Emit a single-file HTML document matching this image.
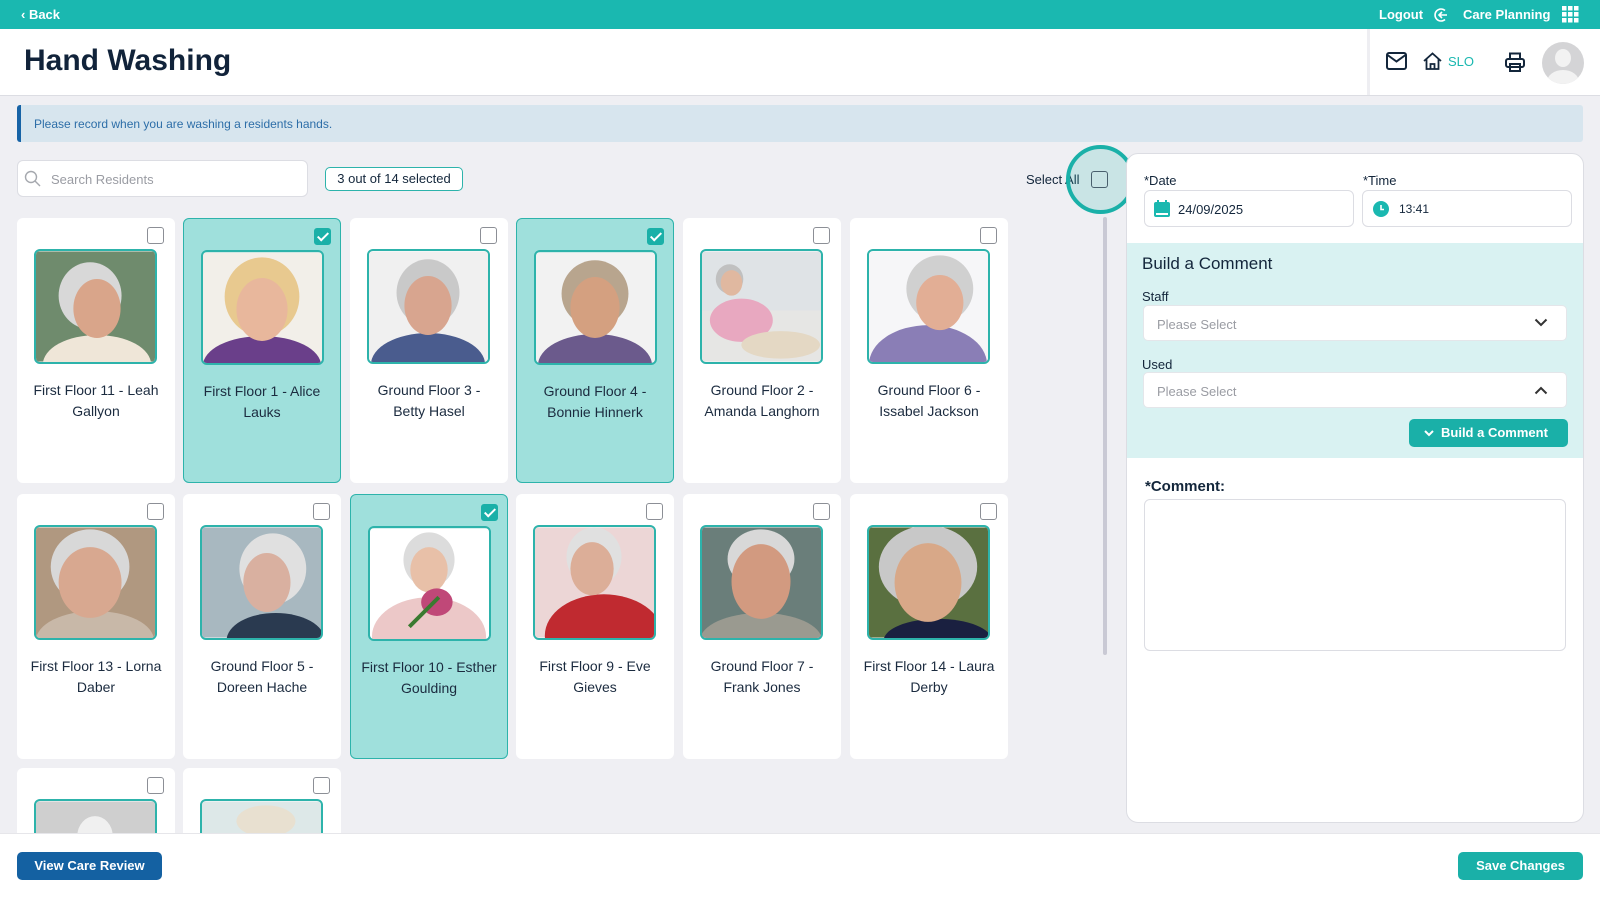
<!DOCTYPE html>
<html><head><meta charset="utf-8"><style>
*{box-sizing:border-box;margin:0;padding:0}
body{width:1600px;height:900px;overflow:hidden;background:#efeff3;font-family:"Liberation Sans",sans-serif;color:#13263b;position:relative}
.abs{position:absolute}
.top{left:0;top:0;width:1600px;height:29px;background:#1ab8b0;color:#fff;font-size:13px;font-weight:bold}
.hdr{left:0;top:29px;width:1600px;height:67px;background:#fff;border-bottom:1px solid #dcdde3}
.card{position:absolute;width:158px;height:265px;background:#fff;border-radius:6px}
.card.sel{background:#9fe0dc;border:1px solid #2db3ab}
.cb{position:absolute;left:130px;top:9px;width:17px;height:17px;border:1.5px solid #8c8f96;border-radius:3px;background:#fff}
.sel .cb{background:#1ab0a8;border-color:#1ab0a8}
.sel .cb:after{content:"";position:absolute;left:5px;top:1px;width:4px;height:9px;border:solid #fff;border-width:0 2px 2px 0;transform:rotate(45deg)}
.ph{position:absolute;left:17px;top:31px;width:123px;height:115px;border:2px solid #2db3ab;border-radius:6px;overflow:hidden}
.ph svg{display:block;width:119px;height:111px}
.nm{position:absolute;left:2px;right:2px;top:162px;text-align:center;font-size:14px;line-height:21px;color:#1b2b3f;white-space:nowrap}
.in{background:#fff;border:1px solid #dcdde3;border-radius:6px}
.lbl{font-size:13px;color:#13263b}
</style></head><body>
<div class="abs top">
 <div class="abs" style="left:21px;top:7px">‹ Back</div>
 <div class="abs" style="left:1379px;top:7px">Logout</div>
 <svg class="abs" style="left:1433px;top:7px" width="16" height="16" viewBox="0 0 16 16" fill="none" stroke="#fff" stroke-width="1.6"><path d="M12 3.5A6 6 0 1 0 12 12.5"/><path d="M14 8H6M9 5L6 8l3 3"/></svg>
 <div class="abs" style="left:1463px;top:7px">Care Planning</div>
 <svg class="abs" style="left:1562px;top:6px" width="17" height="17" viewBox="0 0 17 17" fill="#fff"><rect x="0" y="0" width="4.5" height="4.5"/><rect x="6" y="0" width="4.5" height="4.5"/><rect x="12" y="0" width="4.5" height="4.5"/><rect x="0" y="6" width="4.5" height="4.5"/><rect x="6" y="6" width="4.5" height="4.5"/><rect x="12" y="6" width="4.5" height="4.5"/><rect x="0" y="12" width="4.5" height="4.5"/><rect x="6" y="12" width="4.5" height="4.5"/><rect x="12" y="12" width="4.5" height="4.5"/></svg>
</div>
<div class="abs hdr">
 <div class="abs" style="left:24px;top:15px;font-size:30px;font-weight:bold;color:#11233a">Hand Washing</div>
 <div class="abs" style="left:1367px;top:0;width:3px;height:66px;background:#eeeef2"></div>
 <svg class="abs" style="left:1386px;top:23px" width="21" height="18" viewBox="0 0 21 18" fill="none" stroke="#13263b" stroke-width="2"><rect x="1" y="1" width="19" height="16" rx="2"/><path d="M1.5 3l9 6.5 9-6.5"/></svg>
 <svg class="abs" style="left:1423px;top:23px" width="19" height="18" viewBox="0 0 19 18" fill="none" stroke="#13263b" stroke-width="1.8"><path d="M1 9L9.5 1.5 18 9M3.5 7v10h12V7M7.5 17v-5h4v5"/></svg>
 <div class="abs" style="left:1448px;top:25px;font-size:13px;color:#1ab8b0">SLO</div>
 <svg class="abs" style="left:1505px;top:23px" width="20" height="20" viewBox="0 0 20 20" fill="none" stroke="#13263b" stroke-width="2"><path d="M5 7V1.5h10V7"/><rect x="1" y="7" width="18" height="8" rx="2"/><rect x="5" y="12" width="10" height="7"/></svg>
 <div class="abs" style="left:1542px;top:13px;width:42px;height:42px;border-radius:50%;background:#d4d4d6;overflow:hidden"><div class="abs" style="left:13px;top:7px;width:16px;height:18px;border-radius:50%;background:#f2f2f2"></div><div class="abs" style="left:5px;top:28px;width:32px;height:24px;border-radius:50%;background:#f2f2f2"></div></div>
</div>
<div class="abs" style="left:17px;top:105px;width:1566px;height:37px;background:#d7e5ee;border-left:4px solid #1763a6;border-radius:3px;font-size:12px;color:#2d6ea8;padding:12px 0 0 13px">Please record when you are washing a residents hands.</div>
<div class="abs in" style="left:17px;top:160px;width:291px;height:37px"></div>
<svg class="abs" style="left:24px;top:170px" width="17" height="17" viewBox="0 0 17 17" fill="none" stroke="#a5a8ae" stroke-width="1.4"><circle cx="7" cy="7" r="5.5"/><path d="M11 11l5 5"/></svg>
<div class="abs" style="left:51px;top:172px;font-size:13px;color:#9a9ca3">Search Residents</div>
<div class="abs" style="left:325px;top:167px;width:138px;height:24px;border:1px solid #2db3ab;border-radius:5px;background:#fff;font-size:13px;text-align:center;line-height:22px">3 out of 14 selected</div>
<div class="abs" style="left:1026px;top:172px;font-size:13px">Select All</div>
<div class="abs" style="left:1066px;top:145px;width:69px;height:69px;border-radius:50%;border:4px solid #1ab0a8;background:rgba(26,176,168,0.18)"></div>
<div class="abs" style="left:1091px;top:171px;width:17px;height:17px;border:1.5px solid #13263b;border-radius:3px;opacity:.7"></div>
<div class="abs" style="left:1103px;top:217px;width:4px;height:438px;background:#c9c9d4;border-radius:2px"></div>

<div class="abs" style="left:0;top:206px;width:1090px;height:628px;overflow:hidden">
<div class="card" style="left:17px;top:12px"><div class="cb"></div><div class="ph"><svg viewBox="0 0 121 112"><rect width="121" height="112" fill="#6f8b6d"/><ellipse cx="62" cy="115" rx="55" ry="30" fill="#efe6d8"/><ellipse cx="55" cy="45" rx="32" ry="34" fill="#d8d8d8"/><ellipse cx="62" cy="58" rx="24" ry="30" fill="#d9a58a"/></svg></div><div class="nm">First Floor 11 - Leah<br>Gallyon</div></div>
<div class="card sel" style="left:183px;top:12px"><div class="cb"></div><div class="ph"><svg viewBox="0 0 121 112"><rect width="121" height="112" fill="#f2efe9"/><ellipse cx="60" cy="115" rx="60" ry="30" fill="#6a3f8a"/><ellipse cx="60" cy="45" rx="38" ry="40" fill="#e8c98f"/><ellipse cx="60" cy="58" rx="26" ry="32" fill="#e8b79c"/></svg></div><div class="nm">First Floor 1 - Alice<br>Lauks</div></div>
<div class="card" style="left:350px;top:12px"><div class="cb"></div><div class="ph"><svg viewBox="0 0 121 112"><rect width="121" height="112" fill="#f0f0f0"/><ellipse cx="60" cy="115" rx="58" ry="32" fill="#4a5c8e"/><ellipse cx="60" cy="42" rx="32" ry="34" fill="#c9c9c9"/><ellipse cx="60" cy="55" rx="24" ry="30" fill="#d8a58f"/></svg></div><div class="nm">Ground Floor 3 -<br>Betty Hasel</div></div>
<div class="card sel" style="left:516px;top:12px"><div class="cb"></div><div class="ph"><svg viewBox="0 0 121 112"><rect width="121" height="112" fill="#f2f2f2"/><ellipse cx="60" cy="115" rx="58" ry="32" fill="#6b5a8c"/><ellipse cx="60" cy="42" rx="34" ry="34" fill="#b8a58e"/><ellipse cx="60" cy="56" rx="25" ry="31" fill="#d4a080"/></svg></div><div class="nm">Ground Floor 4 -<br>Bonnie Hinnerk</div></div>
<div class="card" style="left:683px;top:12px"><div class="cb"></div><div class="ph"><svg viewBox="0 0 121 112"><rect width="121" height="112" fill="#dfe3e6"/><rect x="0" y="60" width="121" height="52" fill="#e6e6e4"/><ellipse cx="40" cy="70" rx="32" ry="22" fill="#e8a8c0"/><ellipse cx="80" cy="95" rx="40" ry="14" fill="#e4d8c4"/><ellipse cx="28" cy="28" rx="14" ry="15" fill="#c0c0c0"/><ellipse cx="30" cy="32" rx="11" ry="13" fill="#e0b8a0"/></svg></div><div class="nm">Ground Floor 2 -<br>Amanda Langhorn</div></div>
<div class="card" style="left:850px;top:12px"><div class="cb"></div><div class="ph"><svg viewBox="0 0 121 112"><rect width="121" height="112" fill="#f6f6f8"/><ellipse cx="60" cy="115" rx="60" ry="40" fill="#8a7eb6"/><ellipse cx="72" cy="38" rx="34" ry="34" fill="#d0d0d0"/><ellipse cx="72" cy="52" rx="24" ry="28" fill="#e2ae95"/></svg></div><div class="nm">Ground Floor 6 -<br>Issabel Jackson</div></div>

<div class="card" style="left:17px;top:288px"><div class="cb"></div><div class="ph"><svg viewBox="0 0 121 112"><rect width="121" height="112" fill="#b09880"/><ellipse cx="60" cy="115" rx="60" ry="30" fill="#c8b8a8"/><ellipse cx="55" cy="40" rx="40" ry="38" fill="#d8d8d8"/><ellipse cx="55" cy="56" rx="32" ry="36" fill="#d8a890"/></svg></div><div class="nm">First Floor 13 - Lorna<br>Daber</div></div>
<div class="card" style="left:183px;top:288px"><div class="cb"></div><div class="ph"><svg viewBox="0 0 121 112"><rect width="121" height="112" fill="#a8b8c0"/><ellipse cx="75" cy="115" rx="50" ry="28" fill="#2a3a50"/><ellipse cx="72" cy="42" rx="34" ry="36" fill="#e0e0e0"/><ellipse cx="66" cy="56" rx="24" ry="30" fill="#d9b0a0"/></svg></div><div class="nm">Ground Floor 5 -<br>Doreen Hache</div></div>
<div class="card sel" style="left:350px;top:288px"><div class="cb"></div><div class="ph"><svg viewBox="0 0 121 112"><rect width="121" height="112" fill="#ffffff"/><ellipse cx="60" cy="110" rx="58" ry="40" fill="#ecc8c8"/><ellipse cx="60" cy="32" rx="26" ry="28" fill="#dcdcdc"/><ellipse cx="60" cy="42" rx="19" ry="23" fill="#e8c0a8"/><ellipse cx="68" cy="75" rx="16" ry="14" fill="#c04878"/><path d="M40 100L70 70" stroke="#3a7a30" stroke-width="4"/></svg></div><div class="nm">First Floor 10 - Esther<br>Goulding</div></div>
<div class="card" style="left:516px;top:288px"><div class="cb"></div><div class="ph"><svg viewBox="0 0 121 112"><rect width="121" height="112" fill="#ecd6d6"/><ellipse cx="70" cy="110" rx="60" ry="42" fill="#c02a30"/><ellipse cx="60" cy="30" rx="28" ry="30" fill="#e0e0e0"/><ellipse cx="58" cy="42" rx="22" ry="27" fill="#dcae98"/></svg></div><div class="nm">First Floor 9 - Eve<br>Gieves</div></div>
<div class="card" style="left:683px;top:288px"><div class="cb"></div><div class="ph"><svg viewBox="0 0 121 112"><rect width="121" height="112" fill="#6a7e7a"/><ellipse cx="60" cy="115" rx="62" ry="28" fill="#9a9a90"/><ellipse cx="60" cy="32" rx="34" ry="30" fill="#d8d8d8"/><ellipse cx="60" cy="55" rx="30" ry="38" fill="#d29a80"/></svg></div><div class="nm">Ground Floor 7 -<br>Frank Jones</div></div>
<div class="card" style="left:850px;top:288px"><div class="cb"></div><div class="ph"><svg viewBox="0 0 121 112"><rect width="121" height="112" fill="#5a7040"/><ellipse cx="70" cy="115" rx="55" ry="22" fill="#1a2040"/><ellipse cx="60" cy="40" rx="50" ry="42" fill="#c8c8c8"/><ellipse cx="60" cy="56" rx="34" ry="40" fill="#d8a888"/></svg></div><div class="nm">First Floor 14 - Laura<br>Derby</div></div>

<div class="card" style="left:17px;top:562px"><div class="cb"></div><div class="ph"><svg viewBox="0 0 121 112"><rect width="121" height="112" fill="#cfcfcf"/><ellipse cx="60" cy="35" rx="18" ry="20" fill="#f0f0f0"/></svg></div></div>
<div class="card" style="left:183px;top:562px"><div class="cb"></div><div class="ph"><svg viewBox="0 0 121 112"><rect width="121" height="112" fill="#dde8e8"/><ellipse cx="65" cy="20" rx="30" ry="16" fill="#e8e0d0"/></svg></div></div>
</div>

<div class="abs" style="left:1126px;top:153px;width:458px;height:670px;background:#fff;border:1.5px solid #dcdde3;border-radius:12px;overflow:hidden">
 <div class="abs lbl" style="left:17px;top:19px">*Date</div>
 <div class="abs lbl" style="left:236px;top:19px">*Time</div>
 <div class="abs in" style="left:17px;top:36px;width:210px;height:37px"></div>
 <svg class="abs" style="left:27px;top:46px" width="16" height="17" viewBox="0 0 16 17" fill="#1ab8b0"><rect x="0" y="2" width="16" height="15" rx="2"/><rect x="3" y="0" width="2" height="4"/><rect x="11" y="0" width="2" height="4"/><rect x="2" y="13" width="12" height="2" fill="#fff"/></svg>
 <div class="abs" style="left:51px;top:48px;font-size:13px">24/09/2025</div>
 <div class="abs in" style="left:235px;top:36px;width:210px;height:37px"></div>
 <svg class="abs" style="left:246px;top:47px" width="16" height="16" viewBox="0 0 16 16"><circle cx="8" cy="8" r="8" fill="#1ab8b0"/><path d="M8 4v4.5h3" stroke="#fff" stroke-width="1.6" fill="none"/></svg>
 <div class="abs" style="left:272px;top:48px;font-size:12px">13:41</div>
 <div class="abs" style="left:0;top:89px;width:458px;height:215px;background:#d9f2f2">
  <div class="abs" style="left:15px;top:11px;font-size:17px;color:#13263b">Build a Comment</div>
  <div class="abs lbl" style="left:15px;top:46px">Staff</div>
  <div class="abs" style="left:16px;top:62px;width:424px;height:36px;background:#fff;border-radius:5px;border:1px solid #e4e6ea"></div>
  <div class="abs" style="left:30px;top:74px;font-size:13px;color:#9a9ca3">Please Select</div>
  <svg class="abs" style="left:407px;top:75px" width="14" height="9" viewBox="0 0 14 9" fill="none" stroke="#333" stroke-width="2"><path d="M1.5 1.5l5.5 5.5 5.5-5.5"/></svg>
  <div class="abs lbl" style="left:15px;top:114px">Used</div>
  <div class="abs" style="left:16px;top:129px;width:424px;height:36px;background:#fff;border-radius:5px;border:1px solid #e4e6ea"></div>
  <div class="abs" style="left:30px;top:141px;font-size:13px;color:#9a9ca3">Please Select</div>
  <svg class="abs" style="left:407px;top:143px" width="14" height="9" viewBox="0 0 14 9" fill="none" stroke="#333" stroke-width="2"><path d="M1.5 7.5l5.5-5.5 5.5 5.5"/></svg>
  <div class="abs" style="left:282px;top:176px;width:159px;height:28px;background:#1ab0a8;border-radius:5px;color:#fff;font-size:13px;font-weight:bold;line-height:28px;padding-left:32px">Build a Comment</div>
  <svg class="abs" style="left:297px;top:187px" width="10" height="7" viewBox="0 0 10 7" fill="none" stroke="#fff" stroke-width="2"><path d="M1 1l4 4 4-4"/></svg>
 </div>
 <div class="abs" style="left:18px;top:324px;font-size:15px;font-weight:bold;color:#13263b">*Comment:</div>
 <div class="abs in" style="left:17px;top:345px;width:422px;height:152px"></div>
</div>

<div class="abs" style="left:0;top:833px;width:1600px;height:67px;background:#fff;border-top:1px solid #e6e6ea"></div>
<div class="abs" style="left:17px;top:852px;width:145px;height:28px;background:#1461a2;border-radius:5px;color:#fff;font-size:13px;font-weight:bold;text-align:center;line-height:28px">View Care Review</div>
<div class="abs" style="left:1458px;top:852px;width:125px;height:28px;background:#1ab0a8;border-radius:5px;color:#fff;font-size:13px;font-weight:bold;text-align:center;line-height:28px">Save Changes</div>
</body></html>
